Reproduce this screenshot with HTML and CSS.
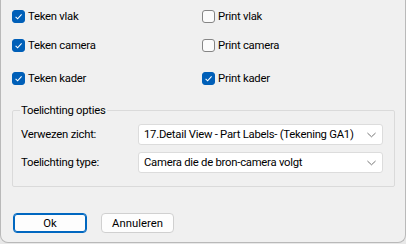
FILE: index.html
```html
<!DOCTYPE html>
<html lang="nl">
<head>
    <meta charset="UTF-8">
    <title>Toelichting</title>
    <link rel="stylesheet" href="styles.css">
</head>
<body>
    <div class="window">
        <div class="checks">
            <label class="check"><span class="box on"><svg viewBox="0 0 13 13"><path d="M3.6 6.9 L5.6 8.8 L9.6 4.3"/></svg></span>Teken vlak</label>
            <label class="check"><span class="box"></span>Print vlak</label>
            <label class="check"><span class="box on"><svg viewBox="0 0 13 13"><path d="M3.6 6.9 L5.6 8.8 L9.6 4.3"/></svg></span>Teken camera</label>
            <label class="check"><span class="box"></span>Print camera</label>
            <label class="check"><span class="box on"><svg viewBox="0 0 13 13"><path d="M3.6 6.9 L5.6 8.8 L9.6 4.3"/></svg></span>Teken kader</label>
            <label class="check"><span class="box on"><svg viewBox="0 0 13 13"><path d="M3.6 6.9 L5.6 8.8 L9.6 4.3"/></svg></span>Print kader</label>
        </div>

        <fieldset class="group">
            <legend>Toelichting opties</legend>
            <div class="field">
                <span class="field-label">Verwezen zicht:</span>
                <div class="select">
                    <span>17.Detail View - Part Labels- (Tekening GA1)</span>
                    <svg viewBox="0 0 10 6"><path d="M0.5 0.8 L5 5 L9.5 0.8"/></svg>
                </div>
            </div>
            <div class="field">
                <span class="field-label">Toelichting type:</span>
                <div class="select">
                    <span>Camera die de bron-camera volgt</span>
                    <svg viewBox="0 0 10 6"><path d="M0.5 0.8 L5 5 L9.5 0.8"/></svg>
                </div>
            </div>
        </fieldset>

        <div class="buttons">
            <button class="btn primary">Ok</button>
            <button class="btn">Annuleren</button>
        </div>
    </div>
</body>
</html>
```
FILE: styles.css
```css
body { margin: 0; background: #e8e8e8; font-family: "Roboto", "Liberation Sans", sans-serif; font-size: 11.3px; letter-spacing: -0.25px; color: #000; }
.window { box-sizing: border-box; width: 406px; height: 243px; background: #f0f0f0; border: 1px solid #b9b9b9; border-top: none; border-radius: 0 0 8px 8px; padding: 10px 0 0 11px; }
.checks { display: grid; grid-template-columns: 190px auto; grid-template-rows: 29px 33px 13px; }
.check { display: flex; align-items: center; height: 13px; line-height: 13px; white-space: nowrap; }
.box { box-sizing: border-box; width: 13px; height: 13px; margin-right: 3px; border: 1px solid #858585; border-radius: 3px; background: #fbfbfb; flex: none; }
.box.on { background: #005fb8; border-color: #005fb8; }
.box svg { display: block; width: 13px; height: 13px; margin: -1px; fill: none; stroke: #fff; stroke-width: 1.1; }
.group { box-sizing: border-box; width: 383px; margin: 18px 0 0 0; padding: 0 7px 13px 7px; border: 1px solid #dadada; border-radius: 2px; }
.group legend { padding: 0 1px; line-height: 15px; }
.field { display: flex; align-items: center; margin-top: 7px; }
.field:first-of-type { margin-top: 6px; }
.field-label { width: 117px; padding-left: 1px; white-space: nowrap; }
.select { box-sizing: border-box; display: flex; align-items: center; justify-content: space-between; width: 245px; height: 21px; padding: 0 6px 0 5px; background: #fff; border: 1px solid #dcdcdc; border-radius: 3px; white-space: nowrap; }
.select svg { width: 9px; height: 6px; fill: none; stroke: #666; stroke-width: 1; flex: none; }
.buttons { display: flex; gap: 14px; margin-top: 26px; padding-left: 1px; }
.btn { box-sizing: border-box; height: 20px; width: 73px; padding: 0; font: inherit; color: #000; background: #fdfdfd; border: 1px solid #d0d0d0; border-radius: 4px; }
.btn.primary { width: 74px; border-color: #0067c0; box-shadow: inset 0 0 0 1px #0067c0; }
```
